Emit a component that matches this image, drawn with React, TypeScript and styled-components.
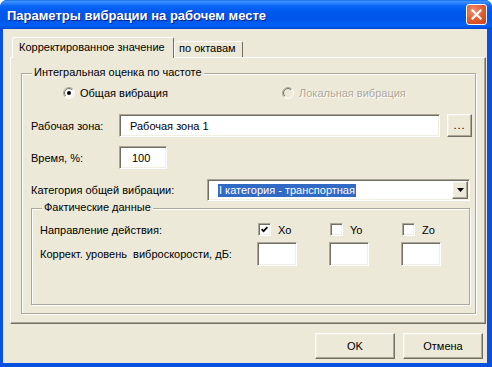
import React, { useId } from "react";
import styled, { createGlobalStyle, css } from "styled-components";

const GlobalStyle = createGlobalStyle`
  html, body { margin: 0; padding: 0; background: #ffffff; }
  body { font-family: "Liberation Sans", Arial, sans-serif; font-size: 11px; color: #000; }
  * { box-sizing: border-box; }
`;

const sunken = css`
  border: 1px solid;
  border-color: #aca899 #ffffff #ffffff #aca899;
  box-shadow: inset 1px 1px 0 #716f64, inset -1px -1px 0 #f1efe2;
  background: #ffffff;
`;

const raised = css`
  border: 1px solid;
  border-color: #ffffff #716f64 #716f64 #ffffff;
  box-shadow: inset -1px -1px 0 #aca899, inset 1px 1px 0 #f1efe2;
  background: #ece9d8;
`;

const Window = styled.div`
  width: 492px;
  height: 367px;
  display: flex;
  flex-direction: column;
  background: #0a4fe0;
  border-radius: 7px 7px 0 0;
  overflow: hidden;
`;

const TitleBar = styled.div`
  height: 29px;
  flex: none;
  display: flex;
  align-items: center;
  justify-content: space-between;
  padding: 0 5px 0 7px;
  background: linear-gradient(
    180deg,
    #0a5bd8 0px,
    #3d95ff 1px,
    #2f83fd 3px,
    #0766f5 6px,
    #0058ee 12px,
    #0055ea 20px,
    #0061f6 25px,
    #0051e0 28px,
    #003dc6 29px
  );
`;

const Title = styled.span`
  color: #ffffff;
  font: bold 13px "Liberation Sans", Arial, sans-serif;
  text-shadow: 1px 1px 0 #0a1e8c;
  padding-top: 1px;
`;

const CloseButton = styled.div`
  width: 21px;
  height: 21px;
  border: 1px solid #ffffff;
  border-radius: 3px;
  background: radial-gradient(circle at 35% 30%, #f09070 0%, #e2582f 55%, #c9431c 100%);
  display: flex;
  align-items: center;
  justify-content: center;
`;

const Frame = styled.div`
  flex: 1;
  display: flex;
  padding: 0 5px 4px 3px;
  background: #0850e0;
`;

const Body = styled.div`
  flex: 1;
  display: flex;
  flex-direction: column;
  background: #ece9d8;
  padding: 8px 1px 4px 7px;
`;

const TabStrip = styled.div`
  height: 21px;
  display: flex;
  align-items: flex-end;
  margin: 0 0 -1px 2px;
  position: relative;
  z-index: 1;
`;

const Tab = styled.div<{ $active?: boolean; $width: number; $pad: number }>`
  width: ${(p) => p.$width}px;
  border: 1px solid;
  border-bottom: none;
  border-color: #ffffff #716f64 transparent #ffffff;
  border-radius: 2px 2px 0 0;
  background: #ece9d8;
  line-height: 13px;
  padding-left: ${(p) => p.$pad}px;
  white-space: nowrap;
  ${(p) =>
    p.$active
      ? css`
          height: 21px;
          padding-top: 3px;
        `
      : css`
          height: 16px;
          margin-bottom: 1px;
          padding-top: 0;
        `}
`;

const Panel = styled.div`
  height: 267px;
  flex: none;
  border: 1px solid;
  border-color: #ffffff #716f64 #716f64 #ffffff;
  box-shadow: inset -1px -1px 0 #aca899;
  padding: 15px 9px 9px 10px;
`;

const GroupBox = styled.div<{ $width?: number; $height: number }>`
  position: relative;
  ${(p) => (p.$width ? `width: ${p.$width}px;` : "")}
  height: ${(p) => p.$height}px;
  flex: none;
  border: 1px solid #aca899;
  box-shadow: inset 1px 1px 0 #ffffff, 1px 1px 0 #ffffff;
  display: flex;
  flex-direction: column;
`;

const Legend = styled.span`
  position: absolute;
  left: 10px;
  top: -8px;
  padding: 0 2px;
  line-height: 13px;
  background: #ece9d8;
  white-space: nowrap;
`;

const MainGroupInner = styled.div`
  padding: 0 0 0 9px;
  display: flex;
  flex-direction: column;
`;

const RadioRow = styled.div`
  height: 13px;
  margin-top: 12px;
  padding-left: 32px;
  display: flex;
  align-items: center;
`;

const RadioItem = styled.div<{ $width?: number; $disabled?: boolean }>`
  ${(p) => (p.$width ? `width: ${p.$width}px;` : "")}
  display: flex;
  align-items: center;
  gap: 5px;
  white-space: nowrap;
  color: ${(p) => (p.$disabled ? "#aca899" : "#000")};
  text-shadow: ${(p) => (p.$disabled ? "1px 1px 0 #ffffff" : "none")};
  svg {
    flex: none;
  }
`;

const FieldRow = styled.div<{ $mt: number; $h: number }>`
  height: ${(p) => p.$h}px;
  margin-top: ${(p) => p.$mt}px;
  display: flex;
  align-items: center;
`;

const Label = styled.span<{ $width: number }>`
  width: ${(p) => p.$width}px;
  flex: none;
  white-space: nowrap;
`;

const TextField = styled.input<{ $width: number; $pad: number }>`
  ${sunken}
  width: ${(p) => p.$width}px;
  height: 100%;
  flex: none;
  font: 11px "Liberation Sans", Arial, sans-serif;
  color: #000;
  padding: 0 0 0 ${(p) => p.$pad}px;
  margin: 0;
  outline: none;
`;

const Button = styled.button<{ $width: number; $height: number }>`
  ${raised}
  width: ${(p) => p.$width}px;
  height: ${(p) => p.$height}px;
  flex: none;
  font: 11px "Liberation Sans", Arial, sans-serif;
  color: #000;
  padding: 0;
  margin: 0;
  display: flex;
  align-items: center;
  justify-content: center;
`;

const BrowseButton = styled(Button)`
  margin-left: 7px;
  padding-bottom: 2px;
  letter-spacing: 1px;
`;

const Combo = styled.div`
  ${sunken}
  width: 263px;
  height: 22px;
  padding: 1px;
  display: flex;
  align-items: stretch;
`;

const ComboText = styled.div`
  flex: 1;
  display: flex;
  align-items: center;
  padding-left: 9px;
`;

const Selected = styled.span`
  background: #316ac5;
  color: #ffffff;
  line-height: 13px;
  padding: 0 1px;
  white-space: nowrap;
`;

const DropButton = styled.div`
  ${raised}
  width: 16px;
  display: flex;
  align-items: center;
  justify-content: center;
`;

const FactGrid = styled.div`
  margin-top: 14px;
  padding-left: 8px;
  display: grid;
  grid-template-columns: 217px 72px 72px 72px;
  grid-template-rows: 13px 24px;
  row-gap: 6px;
  align-items: center;
`;

const CheckItem = styled.div`
  display: flex;
  align-items: center;
  gap: 7px;
  padding-left: 1px;
`;

const CheckBox = styled.div`
  ${sunken}
  width: 13px;
  height: 13px;
  display: flex;
  align-items: center;
  justify-content: center;
`;

const SmallField = styled.div`
  ${sunken}
  width: 40px;
  height: 24px;
`;

const ButtonRow = styled.div`
  margin-top: 9px;
  padding-right: 3px;
  display: flex;
  justify-content: flex-end;
  gap: 8px;
`;

const Radio = ({ checked, disabled }: { checked?: boolean; disabled?: boolean }) => {
  const id = useId().replace(/:/g, "");
  return (
    <svg width="12" height="12" viewBox="0 0 12 12">
      <defs>
        <linearGradient id={`ro${id}`} x1="0" y1="0" x2="1" y2="1">
          <stop offset="0.5" stopColor="#aca899" />
          <stop offset="0.5" stopColor="#ffffff" />
        </linearGradient>
        <linearGradient id={`ri${id}`} x1="0" y1="0" x2="1" y2="1">
          <stop offset="0.5" stopColor="#716f64" />
          <stop offset="0.5" stopColor="#f1efe2" />
        </linearGradient>
      </defs>
      <circle cx="6" cy="6" r="5.5" fill="none" stroke={`url(#ro${id})`} />
      <circle cx="6" cy="6" r="4.5" fill={disabled ? "#ece9d8" : "#ffffff"} stroke={`url(#ri${id})`} />
      {checked && <circle cx="6" cy="6" r="2" fill="#000000" />}
    </svg>
  );
};

const Check = ({ label, checked }: { label: string; checked?: boolean }) => (
  <CheckItem>
    <CheckBox>
      {checked && (
        <svg width="7" height="7" viewBox="0 0 7 7">
          <path d="M0.6 3.2 L2.6 5.2 L6.4 1.2" stroke="#000" strokeWidth="1.7" fill="none" />
        </svg>
      )}
    </CheckBox>
    <span>{label}</span>
  </CheckItem>
);

export default function App() {
  return (
    <>
      <GlobalStyle />
      <Window>
        <TitleBar>
          <Title>Параметры вибрации на рабочем месте</Title>
          <CloseButton>
            <svg width="11" height="11" viewBox="0 0 11 11">
              <path d="M1.5 1.5 L9.5 9.5 M9.5 1.5 L1.5 9.5" stroke="#ffffff" strokeWidth="2.2" strokeLinecap="square" />
            </svg>
          </CloseButton>
        </TitleBar>
        <Frame>
          <Body>
            <TabStrip>
              <Tab $active $width={162} $pad={6}>
                Корректированное значение
              </Tab>
              <Tab $width={69} $pad={4}>
                по октавам
              </Tab>
            </TabStrip>
            <Panel>
              <GroupBox $height={241}>
                <Legend>Интегральная оценка по частоте</Legend>
                <MainGroupInner>
                  <RadioRow>
                    <RadioItem $width={219}>
                      <Radio checked />
                      <span>Общая вибрация</span>
                    </RadioItem>
                    <RadioItem $disabled>
                      <Radio disabled />
                      <span>Локальная вибрация</span>
                    </RadioItem>
                  </RadioRow>
                  <FieldRow $mt={15} $h={23}>
                    <Label $width={88}>Рабочая зона:</Label>
                    <TextField $width={321} $pad={10} readOnly value="Рабочая зона 1" />
                    <BrowseButton $width={25} $height={23}>...</BrowseButton>
                  </FieldRow>
                  <FieldRow $mt={9} $h={23}>
                    <Label $width={88}>Время, %:</Label>
                    <TextField $width={48} $pad={12} readOnly value="100" />
                  </FieldRow>
                  <FieldRow $mt={10} $h={22}>
                    <Label $width={176}>Категория общей вибрации:</Label>
                    <Combo>
                      <ComboText>
                        <Selected>I категория - транспортная</Selected>
                      </ComboText>
                      <DropButton>
                        <svg width="7" height="4" viewBox="0 0 7 4">
                          <polygon points="0,0 7,0 3.5,4" fill="#000" />
                        </svg>
                      </DropButton>
                    </Combo>
                  </FieldRow>
                  <FieldRow $mt={7} $h={97}>
                    <GroupBox $width={439} $height={97}>
                      <Legend>Фактические данные</Legend>
                      <FactGrid>
                        <span>Направление действия:</span>
                        <Check label="Xo" checked />
                        <Check label="Yo" />
                        <Check label="Zo" />
                        <span>Коррект. уровень&nbsp; виброскорости, дБ:</span>
                        <SmallField />
                        <SmallField />
                        <SmallField />
                      </FactGrid>
                    </GroupBox>
                  </FieldRow>
                </MainGroupInner>
              </GroupBox>
            </Panel>
            <ButtonRow>
              <Button $width={80} $height={26}>OK</Button>
              <Button $width={80} $height={26}>Отмена</Button>
            </ButtonRow>
          </Body>
        </Frame>
      </Window>
    </>
  );
}
